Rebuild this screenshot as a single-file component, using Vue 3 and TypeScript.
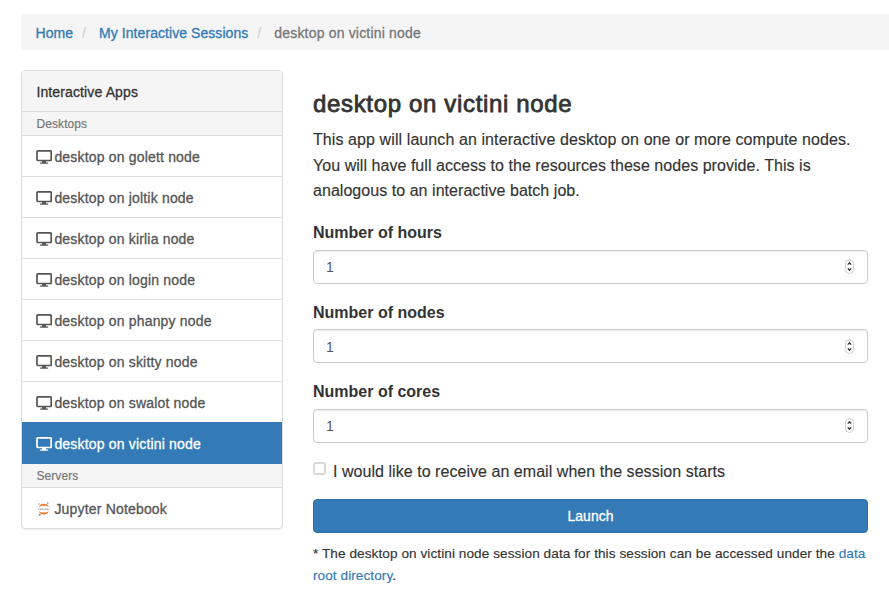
<script setup lang="ts">
import { ref } from 'vue'

interface Field {
  id: string
  label: string
  value: number
}

const desktops: string[] = ['golett', 'joltik', 'kirlia', 'login', 'phanpy', 'skitty', 'swalot', 'victini']
const active = ref('victini')
const fields = ref<Field[]>([
  { id: 'hours', label: 'Number of hours', value: 1 },
  { id: 'nodes', label: 'Number of nodes', value: 1 },
  { id: 'cores', label: 'Number of cores', value: 1 },
])
const email = ref(false)

function step(field: Field, delta: number) {
  field.value = Math.max(1, field.value + delta)
}
</script>

<template>
  <div class="page">
    <nav class="breadcrumb">
      <a class="crumb home">Home</a>
      <span class="slash">/</span>
      <a class="crumb sessions">My Interactive Sessions</a>
      <span class="slash">/</span>
      <span class="current">desktop on victini node</span>
    </nav>
    <div class="columns">
      <aside class="panel">
        <div class="panel-title"><span>Interactive Apps</span></div>
        <div class="group">Desktops</div>
        <a
          v-for="name in desktops"
          :key="name"
          class="item"
          :class="{ active: name === active }"
          @click="active = name"
        >
          <svg class="icon" viewBox="0 0 16 14" aria-hidden="true">
            <rect x="1" y="0.9" width="14.2" height="9.6" rx="0.9" fill="none" stroke="currentColor" stroke-width="1.7" />
            <path d="M6.400 10.500h3.400l.4 1.900h1.400a.7.7 0 0 1 0 1.400H4.600a.7.7 0 0 1 0-1.400H6z" fill="currentColor" />
          </svg>
          <span class="item-text">desktop on {{ name }} node</span>
        </a>
        <div class="group">Servers</div>
        <a class="item last">
          <svg class="icon" viewBox="0 0 16 14" aria-hidden="true">
            <path d="M2.800 5C3.500 2.700 5.500 1.700 7.800 1.700s4.300 1 5 3.300C11.500 4.100 9.900 3.700 7.800 3.700s-3.700.4-5 1.300z" fill="#f37726" />
            <path d="M2.800 9.200c.7 2.300 2.700 3.300 5 3.300s4.300-1 5-3.300c-1.300.9-2.900 1.300-5 1.300s-3.700-.4-5-1.300z" fill="#f37726" />
            <path d="M2.300 7.200h11" stroke="#777" stroke-width="1.500" stroke-dasharray="1.300 .4" opacity=".6" />
            <circle cx="11.800" cy="1" r=".8" fill="#777" />
            <circle cx="3.100" cy="1.900" r=".6" fill="#777" />
            <circle cx="3.800" cy="12.900" r=".9" fill="#777" />
          </svg>
          <span class="item-text">Jupyter Notebook</span>
        </a>
      </aside>
      <main class="content">
        <h3>desktop on victini node</h3>
        <p class="intro">
          <span class="lead">This app will launch an interactive desktop on one or more compute nodes.</span><br />
          You will have full access to the resources these nodes provide. This is<br />
          analogous to an interactive batch job.
        </p>
        <form @submit.prevent>
          <div v-for="f in fields" :key="f.id" class="field" :class="f.id">
            <label :for="f.id">{{ f.label }}</label>
            <div class="control">
              <input :id="f.id" v-model.number="f.value" type="number" min="1" />
              <svg class="stepper" viewBox="0 0 9 15" aria-hidden="true">
                <rect x=".5" y=".5" width="8" height="14" rx="4" fill="#fff" stroke="#cfcfcf" />
                <path d="M2.800 5.600L4.500 3.700l1.700 1.900M2.800 9.400l1.700 1.900 1.700-1.900" fill="none" stroke="#333" stroke-width="1.300" />
                <rect width="9" height="7" fill="transparent" @click="step(f, 1)" />
                <rect y="8" width="9" height="7" fill="transparent" @click="step(f, -1)" />
              </svg>
            </div>
          </div>
          <label class="check">
            <input v-model="email" type="checkbox" />
            <span>I would like to receive an email when the session starts</span>
          </label>
          <button type="submit">Launch</button>
        </form>
        <p class="note">
          * The desktop on victini node session data for this session can be accessed under the <a>data</a><br />
          <a>root directory</a>.
        </p>
      </main>
    </div>
  </div>
</template>

<style>
body {
  background: #fff;
}
</style>

<style scoped>
.page {
  box-sizing: border-box;
  width: 889px;
  height: 599px;
  padding: 14px 0 0 21px;
  overflow: hidden;
  font-family: "Liberation Sans", Arial, sans-serif;
  font-size: 14px;
  line-height: 20px;
  color: #333;
}
a {
  color: #337ab7;
  text-decoration: none;
  cursor: pointer;
}
.breadcrumb {
  box-sizing: border-box;
  display: flex;
  height: 36px;
  padding: 9px 14px 7px 14.5px;
  background: #f5f5f5;
  border-radius: 4px 0 0 4px;
  white-space: nowrap;
}
.crumb {
  letter-spacing: 0.06px;
  -webkit-text-stroke: 0.3px currentColor;
}
.slash {
  width: 5px;
  margin: 0 12px 0 9px;
  color: #ccc;
}
.current {
  color: #777;
  letter-spacing: 0.18px;
  -webkit-text-stroke: 0.3px currentColor;
}
.columns {
  display: flex;
  align-items: flex-start;
  gap: 30px;
  margin-top: 20px;
}
.panel {
  box-sizing: border-box;
  width: 262px;
  border: 1px solid #ddd;
  border-radius: 4px;
  box-shadow: 0 1px 1px rgba(0, 0, 0, 0.05);
  overflow: hidden;
}
.panel-title {
  height: 40px;
  padding: 0 14.4px;
  background: #f5f5f5;
  border-bottom: 1px solid #ddd;
  line-height: 42px;
  letter-spacing: 0.13px;
  -webkit-text-stroke: 0.3px currentColor;
}
.group {
  height: 23px;
  padding: 0 14.4px;
  background: #f5f5f5;
  border-bottom: 1px solid #ddd;
  color: #777;
  font-size: 12px;
  line-height: 24px;
  letter-spacing: 0.1px;
  -webkit-text-stroke: 0.2px currentColor;
}
.item {
  display: flex;
  height: 40px;
  padding: 0 14px;
  align-items: center;
  border-bottom: 1px solid #ddd;
  color: #555;
  letter-spacing: 0.18px;
  -webkit-text-stroke: 0.3px currentColor;
}
.item.active {
  height: 42px;
  margin-top: -1px;
  border-bottom: 0;
  background: #337ab7;
  color: #fff;
}
.item.last {
  border-bottom: 0;
}
.item-text {
  margin: 2px 0 0 2.4px;
}
.icon {
  width: 16px;
  height: 14px;
  margin-top: 2px;
  flex: none;
}
.content {
  width: 555px;
}
h3 {
  margin: 19px 0 0;
  font-size: 24px;
  font-weight: 400;
  line-height: 30px;
  letter-spacing: 0.66px;
  white-space: nowrap;
  -webkit-text-stroke: 0.8px currentColor;
}
.intro {
  margin: 8px 0 0;
  font-size: 16px;
  line-height: 25.6px;
  letter-spacing: 0.045px;
  white-space: nowrap;
  -webkit-text-stroke: 0.15px currentColor;
}
.lead {
  letter-spacing: 0.09px;
}
form {
  margin: 16px 0 0;
}
.field {
  height: 79.6px;
}
.field label {
  display: block;
  box-sizing: border-box;
  height: 30px;
  font-size: 16px;
  font-weight: 700;
  line-height: 26px;
}
.field.nodes label {
  padding-top: 1px;
}
.control {
  box-sizing: border-box;
  display: flex;
  height: 34px;
  padding: 0 13px 0 12px;
  align-items: center;
  border: 1px solid #ccc;
  border-radius: 4px;
  box-shadow: inset 0 1px 1px rgba(0, 0, 0, 0.075);
}
.control input {
  flex: 1;
  min-width: 0;
  padding: 1px 0 0;
  border: 0;
  outline: 0;
  background: transparent;
  color: #555;
  font: 14px "Liberation Sans", Arial, sans-serif;
  appearance: textfield;
}
.control input::-webkit-inner-spin-button {
  appearance: none;
}
.stepper {
  width: 9px;
  height: 15px;
}
.check {
  display: flex;
  height: 40px;
  font-size: 16px;
  line-height: 26px;
  letter-spacing: 0.045px;
  white-space: nowrap;
  -webkit-text-stroke: 0.15px currentColor;
}
.check input {
  box-sizing: border-box;
  flex: none;
  appearance: none;
  width: 13px;
  height: 13px;
  margin: 3px 7px 0 0;
  border: 2px solid #d8d8d8;
  border-radius: 3px;
  background: #fff;
}
.check input:checked {
  background: #337ab7;
}
button {
  display: block;
  box-sizing: border-box;
  width: 100%;
  height: 34px;
  padding: 1px 0 0;
  border: 1px solid #2e6da4;
  border-radius: 4px;
  background: #337ab7;
  color: #fff;
  font: 14px "Liberation Sans", Arial, sans-serif;
  -webkit-text-stroke: 0.3px currentColor;
}
.note {
  margin: 10px 0 0;
  font-size: 13.6px;
  line-height: 22px;
  letter-spacing: 0.07px;
  white-space: nowrap;
  -webkit-text-stroke: 0.15px currentColor;
}
</style>
